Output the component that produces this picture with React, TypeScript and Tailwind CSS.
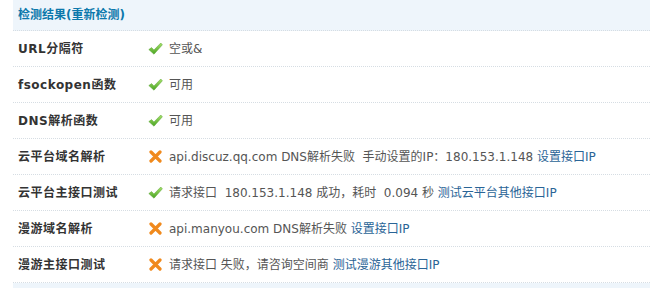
import type { ReactNode } from "react";

type CheckRow = {
  label: string;
  ok: boolean;
  content: ReactNode;
};

function CheckIcon() {
  return (
    <svg width="15" height="13" viewBox="0 0 15 13" className="shrink-0">
      <defs>
        <linearGradient id="okGrad" x1="0" y1="0" x2="0" y2="1">
          <stop offset="0" stopColor="#a6e06a" />
          <stop offset="1" stopColor="#4aa523" />
        </linearGradient>
      </defs>
      <path
        d="M0.8 7.6 L3.6 5.6 L5.9 8 L12.8 1 L14.4 2.8 L6 12.2 Z"
        fill="url(#okGrad)"
        stroke="#5aa535"
        strokeWidth="0.5"
        strokeLinejoin="round"
      />
    </svg>
  );
}

function CrossIcon() {
  return (
    <svg width="13" height="13" viewBox="0 0 13 13" className="shrink-0">
      <path
        d="M2 2 L11 11 M11 2 L2 11"
        stroke="#f0891c"
        strokeWidth="3.2"
        strokeLinecap="round"
      />
    </svg>
  );
}

function Link({ children }: { children: ReactNode }) {
  return <span className="text-[#2a6496]">{children}</span>;
}

const ROWS: CheckRow[] = [
  { label: "URL分隔符", ok: true, content: "空或&" },
  { label: "fsockopen函数", ok: true, content: "可用" },
  { label: "DNS解析函数", ok: true, content: "可用" },
  {
    label: "云平台域名解析",
    ok: false,
    content: (
      <>
        api.discuz.qq.com DNS解析失败 &nbsp;手动设置的IP：180.153.1.148 <Link>设置接口IP</Link>
      </>
    ),
  },
  {
    label: "云平台主接口测试",
    ok: true,
    content: (
      <>
        请求接口 &nbsp;180.153.1.148 成功，耗时 &nbsp;0.094 秒 <Link>测试云平台其他接口IP</Link>
      </>
    ),
  },
  {
    label: "漫游域名解析",
    ok: false,
    content: (
      <>
        api.manyou.com DNS解析失败 <Link>设置接口IP</Link>
      </>
    ),
  },
  {
    label: "漫游主接口测试",
    ok: false,
    content: (
      <>
        请求接口 失败，请咨询空间商 <Link>测试漫游其他接口IP</Link>
      </>
    ),
  },
];

export default function App() {
  return (
    <div
      className="h-[288px] w-[650px] overflow-hidden bg-white pl-[13px] text-[12px]"
      style={{ fontFamily: '"DejaVu Sans", Tahoma, "Noto Sans CJK SC", sans-serif' }}
    >
      <div className="flex h-[31px] items-center border-b border-dotted border-[#d6dde3] bg-[#eef5fb] pl-[5px] font-bold text-[#0b78ab]">
        检测结果(重新检测)
      </div>
      {ROWS.map((row) => (
        <div
          key={row.label}
          className="flex h-[36px] items-center border-b border-dotted border-[#d6dde3] pl-[5px]"
        >
          <div className="w-[130px] shrink-0 font-bold tracking-[0.5px] text-[#333]">{row.label}</div>
          <div className="flex items-center gap-[6px] whitespace-nowrap text-[#555]">
            <span className="flex w-[15px] justify-center">
              {row.ok ? <CheckIcon /> : <CrossIcon />}
            </span>
            <span>{row.content}</span>
          </div>
        </div>
      ))}
      <div className="h-[8px] bg-[#eef5fb]" />
    </div>
  );
}
